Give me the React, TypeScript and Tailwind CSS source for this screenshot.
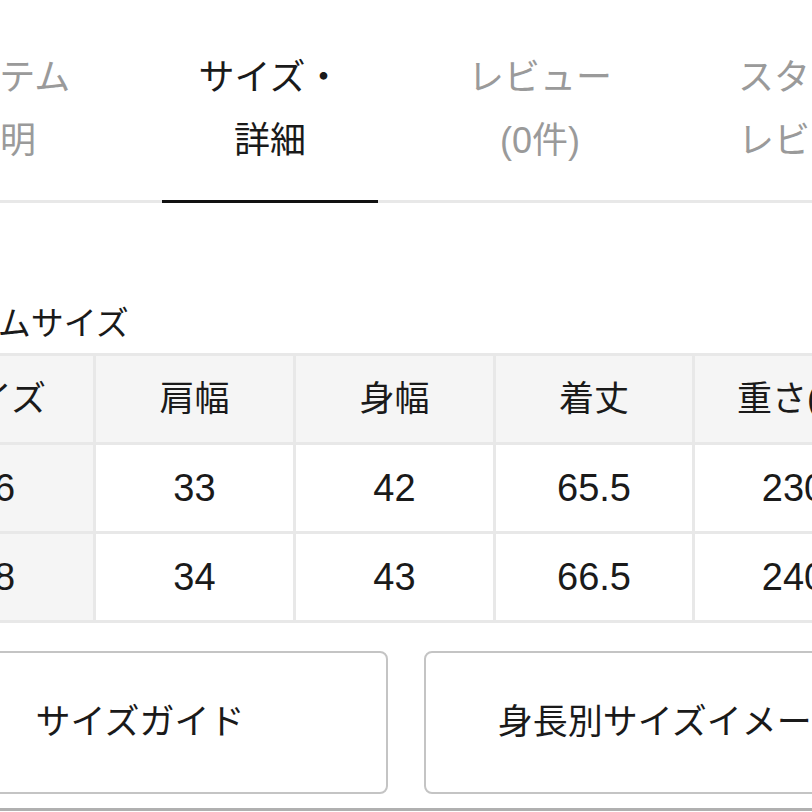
import React from 'react';

const TABS = [
  { id: 'item', lines: ['アイテム', '説明'] },
  { id: 'size', lines: ['サイズ・', '詳細'] },
  { id: 'review', lines: ['レビュー', '(0件)'] },
  { id: 'staff', lines: ['スタッフ', 'レビュー'] },
];

const HEADERS = ['サイズ', '肩幅', '身幅', '着丈', '重さ(g)'];

const ROWS = [
  ['36', '33', '42', '65.5', '230'],
  ['38', '34', '43', '66.5', '240'],
];

const FONT = { fontFamily: '"Liberation Sans", "Noto Sans CJK JP", sans-serif' };

export default function App() {
  const activeTab = 'size';

  return (
    <div className="w-[812px] h-[812px] overflow-hidden bg-white text-[#1a1a1a]" style={FONT}>
      <nav className="flex w-[1080px] -ml-[135px]">
        {TABS.map((tab) => {
          const isActive = tab.id === activeTab;
          return (
            <div key={tab.id} className="w-[270px] flex flex-col">
              <div
                className={`h-[200px] pt-[17px] flex flex-col items-center justify-center text-[36px] leading-[63px] ${
                  isActive ? 'text-[#1a1a1a]' : 'text-[#9a9a9a]'
                }`}
              >
                {tab.lines.map((line) => (
                  <span key={line}>{line}</span>
                ))}
              </div>
              <div className="h-[3px] bg-[#e8e8e8] flex justify-center">
                {isActive && <div className="w-[216px] h-full bg-[#111]" />}
              </div>
            </div>
          );
        })}
      </nav>

      {/* Size section */}
      <section className="w-[1028px] -ml-[108px]">
        <h2 className="mt-[95px] pl-[10px] text-[33px] leading-[51px] font-normal">アイテムサイズ</h2>

        {/* Size table */}
        <div className="mt-[4px] grid grid-cols-[198px_197px_197px_196px_197px] gap-[3px] p-[3px] bg-[#e8e8e8] w-fit">
          {HEADERS.map((h) => (
            <div key={h} className="h-[86px] bg-[#f5f5f5] flex items-center justify-center text-[35px]">
              {h}
            </div>
          ))}
          {ROWS.map((row) =>
            row.map((cell, i) => (
              <div
                key={`${row[0]}-${i}`}
                className={`h-[86px] flex items-center justify-center text-[38px] ${
                  i === 0 ? 'bg-[#f5f5f5]' : 'bg-white'
                }`}
              >
                {cell}
              </div>
            ))
          )}
        </div>

        {/* Buttons */}
        <div className="mt-[28px] grid grid-cols-2 gap-[36px]">
          <button className="h-[143px] border-2 border-[#c4c4c4] rounded-[8px] bg-white text-[35px] text-[#1a1a1a]">
            サイズガイド
          </button>
          <button className="h-[143px] border-2 border-[#c4c4c4] rounded-[8px] bg-white text-[35px] text-[#1a1a1a]">
            身長別サイズイメージ
          </button>
        </div>

        <div className="mt-[14px] border-t-[3px] border-[#b0b0b0]" />
      </section>
    </div>
  );
}
